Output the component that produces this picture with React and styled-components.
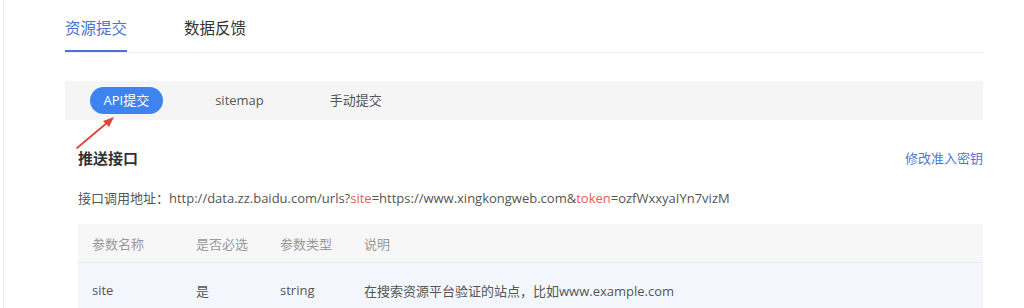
import React from "react";
import styled, { createGlobalStyle } from "styled-components";

const Global = createGlobalStyle`
  html, body { margin: 0; padding: 0; background: #fff; }
  body { font-family: "Open Sans", "Noto Sans CJK SC", sans-serif; color: #333; }
`;

const Shell = styled.div`
  padding-left: 3px;
  height: 308px;
  overflow: hidden;
  background: #fff;
`;

const Card = styled.div`
  position: relative;
  height: 100%;
  border-left: 1px solid #e9e9e9;
  padding: 0 41px 0 61px;
`;

const Tabs = styled.div`
  display: flex;
  gap: 57px;
  border-bottom: 1px solid #eeeeee;
`;

const Tab = styled.div`
  font-size: 15.5px;
  line-height: 20px;
  padding: 18px 0 12px;
  border-bottom: 2px solid ${(p) => (p.$active ? "#4a74d0" : "transparent")};
  color: ${(p) => (p.$active ? "#4a74d0" : "#333")};
`;

const SubBar = styled.div`
  margin-top: 28px;
  height: 39px;
  background: #f5f5f5;
  display: flex;
  align-items: center;
  gap: 39px;
  padding-left: 25px;
`;

const SubTab = styled.div`
  height: 27px;
  line-height: 27px;
  padding: 0 13.5px;
  border-radius: 14px;
  font-size: 13px;
  background: ${(p) => (p.$active ? "#3d84f0" : "transparent")};
  color: ${(p) => (p.$active ? "#fff" : "#555")};
`;

const Section = styled.div`
  padding-left: 13px;
`;

const Head = styled.div`
  margin-top: 22px;
  height: 30px;
  display: flex;
  align-items: center;
  justify-content: space-between;
`;

const Title = styled.div`
  font-size: 15px;
  font-weight: bold;
  color: #333;
`;

const Link = styled.div`
  font-size: 13px;
  color: #4a78d6;
`;

const UrlLine = styled.div`
  margin-top: 16px;
  font-size: 13px;
  line-height: 20px;
  color: #555;
`;

const Key = styled.span`
  color: #e0605a;
`;

const Table = styled.div`
  margin-top: 16px;
`;

const Row = styled.div`
  display: grid;
  grid-template-columns: 104px 84px 84px 1fr;
  height: ${(p) => (p.$header ? "38px" : "54px")};
  align-items: center;
  background: ${(p) => (p.$header ? "#f7f7f7" : "#f3f7fd")};
  border-bottom: ${(p) => (p.$header ? "1px solid #e8edf4" : "none")};
  color: ${(p) => (p.$header ? "#999" : "#555")};
  font-size: 13px;
`;

const Cell = styled.div`
  padding-left: 14px;
  white-space: nowrap;
`;

const Arrow = styled.svg`
  position: absolute;
  left: 70px;
  top: 112px;
`;

export default function App() {
  return (
    <>
      <Global />
      <Shell>
        <Card>
          <Tabs>
            <Tab $active>资源提交</Tab>
            <Tab>数据反馈</Tab>
          </Tabs>
          <SubBar>
            <SubTab $active>API提交</SubTab>
            <SubTab>sitemap</SubTab>
            <SubTab>手动提交</SubTab>
          </SubBar>
          <Section>
            <Head>
              <Title>推送接口</Title>
              <Link>修改准入密钥</Link>
            </Head>
            <UrlLine>
              接口调用地址：http://data.zz.baidu.com/urls?<Key>site</Key>=https://www.xingkongweb.com&amp;<Key>token</Key>=ozfWxxyaIYn7vizM
            </UrlLine>
            <Table>
              <Row $header>
                <Cell>参数名称</Cell>
                <Cell>是否必选</Cell>
                <Cell>参数类型</Cell>
                <Cell>说明</Cell>
              </Row>
              <Row>
                <Cell>site</Cell>
                <Cell>是</Cell>
                <Cell>string</Cell>
                <Cell>在搜索资源平台验证的站点，比如www.example.com</Cell>
              </Row>
            </Table>
          </Section>
          <Arrow width="46" height="40" viewBox="0 0 46 40">
            <line x1="3" y1="36" x2="34" y2="10" stroke="#e2453c" strokeWidth="1.8" strokeLinecap="round" />
            <polygon points="40,5 29,9 35,15" fill="#e2453c" />
          </Arrow>
        </Card>
      </Shell>
    </>
  );
}
